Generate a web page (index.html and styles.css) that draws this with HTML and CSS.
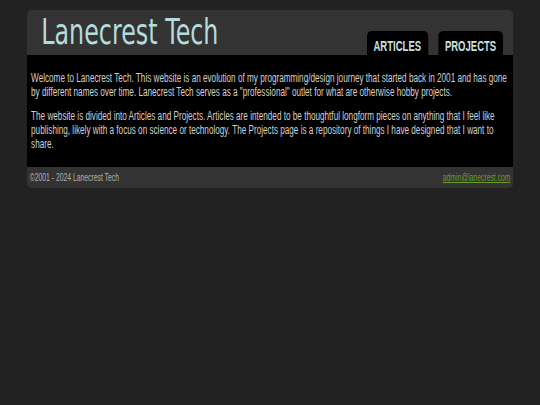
FILE: index.html
```html
<!DOCTYPE html>
<html lang="en">
<head>
  <meta charset="UTF-8" />
  <meta name="viewport" content="width=device-width, initial-scale=1.0"/>
  <title>Lanecrest Tech</title>
  <link rel="stylesheet" href="styles.css">
</head>
<body>
  <div class="frame">
    <div class="page">
      <header>
        <div class="logo">Lanecrest Tech</div>
        <nav class="tabs">
          <a href="#" class="tab">ARTICLES</a>
          <a href="#" class="tab">PROJECTS</a>
        </nav>
      </header>

      <main class="content">
        <p>Welcome to Lanecrest Tech. This website is an evolution of my programming/design journey that started back in 2001 and has gone by different names over time. Lanecrest Tech serves as a "professional" outlet for what are otherwise hobby projects.</p>
        <p>The website is divided into Articles and Projects. Articles are intended to be thoughtful longform pieces on anything that I feel like publishing, likely with a focus on science or technology. The Projects page is a repository of things I have designed that I want to share.</p>
      </main>

      <footer>
        <span>&copy;2001 - 2024 Lanecrest Tech</span>
        <a href="#">admin@lanecrest.com</a>
      </footer>
    </div>
  </div>
</body>
</html>
```

FILE: styles.css
```css
html, body {
  margin: 0;
  background-color: #222;
  font-family: "Liberation Sans", Arial, sans-serif;
}
.frame {
  width: 486px;
  margin: 10px 27px 0;
  overflow: hidden;
}
/* the whole layout is drawn narrow, like the original */
.page {
  width: 715px;
  transform: scaleX(0.68);
  transform-origin: 0 0;
}
header {
  display: flex;
  justify-content: space-between;
  align-items: flex-end;
  height: 45px;
  background-color: #333;
  border-radius: 7px 7px 0 0 / 5px 5px 0 0;
}
.logo {
  font-family: "DejaVu Sans", sans-serif;
  font-size: 35px;
  line-height: 45px;
  color: #b4dcdc;
  padding-left: 21px;
  white-space: nowrap;
}
.tabs {
  display: flex;
  gap: 15px;
  margin-right: 15px;
}
.tab {
  display: block;
  height: 21px;
  padding: 3px 10px 0;
  line-height: 24px;
  background-color: #000;
  border-radius: 7px 7px 0 0 / 5px 5px 0 0;
  color: #c8e0e0;
  font-size: 14px;
  font-weight: bold;
  text-decoration: none;
}
.content {
  display: block;
  background-color: #000;
  padding: 6px 4px 6px 6px;
  color: #d0d0d0;
  font-size: 12px;
  line-height: 14px;
}
.content p {
  margin: 10px 0;
}
footer {
  display: flex;
  justify-content: space-between;
  align-items: center;
  height: 21px;
  padding: 0 4px;
  background-color: #333;
  border-radius: 0 0 7px 7px / 0 0 5px 5px;
  font-size: 10px;
  color: #b0b0b0;
}
footer a {
  color: #6a9a2a;
}
```
